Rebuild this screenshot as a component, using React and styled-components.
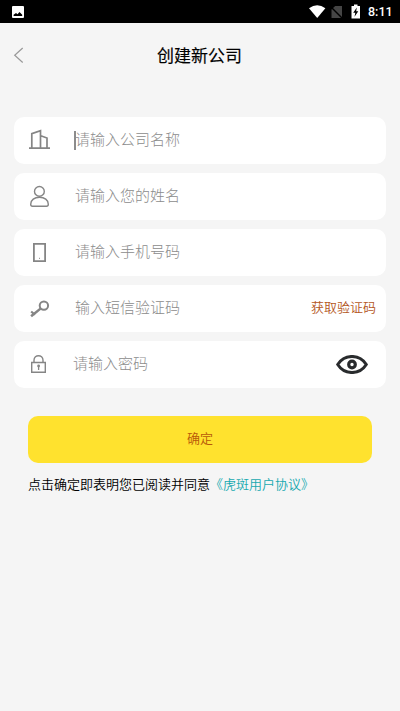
import React from 'react';
import styled, { createGlobalStyle } from 'styled-components';

const GlobalStyle = createGlobalStyle`
  * { box-sizing: border-box; }
  body { margin: 0; background: #f5f5f5; font-family: "Noto Sans CJK SC", sans-serif; }
  button, input { font-family: inherit; }
`;

const Screen = styled.main`
  width: 400px;
  height: 711px;
  background: #f5f5f5;
  overflow: hidden;
`;

const StatusBar = styled.div`
  display: flex;
  align-items: center;
  height: 23px;
  padding: 0 8px 0 12px;
  background: #000;
  svg { display: block; }
`;

const StatusIcons = styled.div`
  display: flex;
  align-items: center;
  margin-left: auto;
`;

const Clock = styled.span`
  margin-left: 7px;
  color: #fff;
  font: 500 12.5px/23px Roboto, sans-serif;
  width: 24px;
  white-space: nowrap;
`;

const Header = styled.header`
  display: grid;
  grid-template-columns: 40px 1fr 41px;
  align-items: center;
  height: 64px;
`;

const BackButton = styled.button`
  display: flex;
  padding: 0 0 0 13px;
  border: 0;
  background: none;
`;

const Title = styled.h1`
  margin: 0;
  color: #000;
  font-size: 17px;
  font-weight: 400;
  line-height: 24px;
  text-align: center;
  -webkit-text-stroke: 0.15px #000;
`;

const Form = styled.form`
  display: flex;
  flex-direction: column;
  gap: 9px;
  padding: 30px 14px 0;
`;

const Field = styled.label`
  display: flex;
  align-items: center;
  height: 47px;
  padding-right: 10px;
  border-radius: 10px;
  background: #fff;
`;

const FieldIcon = styled.span`
  display: flex;
  width: 24px;
  margin: 0 ${(p) => (p.$tight ? 21 : 23)}px 0 14px;
`;

const Caret = styled.span`
  width: 2px;
  height: 19px;
  margin: 0 -1px 0 -1px;
  background: #8c8c8c;
`;

const Placeholder = styled.span`
  flex: 1;
  color: #8c8c8c;
  font-size: 15px;
  font-weight: 300;
  line-height: 22px;
  padding-bottom: 3px;
`;

const CodeButton = styled.button`
  padding: 0 0 3px;
  border: 0;
  background: none;
  color: #b4561c;
  font-size: 13px;
  font-weight: 350;
  line-height: 20px;
`;

const EyeButton = styled.button`
  display: flex;
  padding: 0;
  margin-right: 8px;
  border: 0;
  background: none;
`;

const SubmitButton = styled.button`
  height: 47px;
  margin: 19px 14px 0;
  padding: 0 0 4px;
  border: 0;
  border-radius: 10px;
  background: #ffe22e;
  color: #b85808;
  font-size: 13px;
  font-weight: 350;
`;

const Agreement = styled.p`
  margin: 2px 14px 0;
  color: #000;
  font-size: 13px;
  font-weight: 350;
  line-height: 20px;
  white-space: nowrap;
`;

const AgreementLink = styled.a`
  color: #17a9b0;
`;

const icons = {
  company: (
    <path d="M1 19.1H22M3.8 19V4.6L12.5 1.6V19M12.8 6.8L19 9V19" strokeWidth="1.7" />
  ),
  person: (
    <>
      <circle cx="11.4" cy="6.4" r="4.9" />
      <path d="M4.5 21.2H18.5Q20.3 21.2 20.3 19.2C20.3 15 16.5 12.3 11.5 12.3S2.7 15 2.7 19.2Q2.7 21.2 4.5 21.2Z" />
    </>
  ),
  phone: (
    <>
      <path d="M5.9 2.9H17.1V20.1H5.9Z" strokeWidth="1.8" />
      <path d="M11 17.3H12" strokeWidth="1" />
    </>
  ),
  key: (
    <>
      <circle cx="15.9" cy="8.6" r="4.2" strokeWidth="2" />
      <path d="M12.8 11.4L3.1 19.2" strokeWidth="2.5" />
      <path d="M3.2 14.5L6.8 17.8" strokeWidth="2.2" />
    </>
  ),
  lock: (
    <>
      <path d="M3.7 9.5H17.3V19.3H3.7ZM6 9.3V7.2C6 1.2 15 1.2 15 7.2V9.3" strokeWidth="1.4" />
      <path d="M10.6 12V17" strokeWidth="1.3" />
      <circle cx="10.6" cy="13" r="1.4" fill="#858585" stroke="none" />
    </>
  ),
};

const Icon = ({ name }) => (
  <svg width="24" height="23" viewBox="0 0 24 23" fill="none" stroke="#858585" strokeWidth="1.4">
    {icons[name]}
  </svg>
);

const fields = [
  { icon: 'company', text: '请输入公司名称', focused: true },
  { icon: 'person', text: '请输入您的姓名' },
  { icon: 'phone', text: '请输入手机号码' },
  { icon: 'key', text: '输入短信验证码', action: <CodeButton type="button">获取验证码</CodeButton> },
  {
    icon: 'lock',
    text: '请输入密码',
    tight: true,
    action: (
      <EyeButton type="button" aria-label="显示密码">
        <svg width="32" height="19" viewBox="0 0 32 19" fill="none" stroke="#292b2d">
          <path d="M1.7 9.5C8.5-1.2 23.5-1.2 30.3 9.5C23.5 20.2 8.5 20.2 1.7 9.5Z" strokeWidth="3" />
          <circle cx="16" cy="9.5" r="3.3" strokeWidth="3.2" />
        </svg>
      </EyeButton>
    ),
  },
];

export default function App() {
  return (
    <Screen>
      <GlobalStyle />
      <StatusBar>
        <svg width="12" height="12" viewBox="0 0 12 12">
          <rect width="12" height="12" rx="1" fill="#fff" />
          <path d="M1.6 10V8.7L4 6.9L5.5 8.2L7.5 6L10.2 8.7V10Z" fill="#000" />
        </svg>
        <StatusIcons>
          <svg width="52" height="16" viewBox="0 0 52 16">
            <path d="M0 4.3Q8.2-1.7 16.4 4.3L8.2 14Z" fill="#fff" />
            <path d="M26.2 2H33V14H22.5V5.4Z" fill="#454545" />
            <path d="M22 3L33.5 14.5" stroke="#000" strokeWidth="1.4" />
            <path d="M42.5 2H45V.5H48.5V2H51V14.5H42.5Z" fill="#fff" />
            <path d="M47.8 3.5L44.2 8.7H46.3L45.5 12.7L49.3 7.3H47.2Z" fill="#000" />
          </svg>
          <Clock>8:11</Clock>
        </StatusIcons>
      </StatusBar>
      <Header>
        <BackButton aria-label="返回">
          <svg width="12" height="16" viewBox="0 0 12 16" fill="none" stroke="#999" strokeWidth="1.2">
            <path d="M9.7 1L1.7 8.2L9.7 15.5" />
          </svg>
        </BackButton>
        <Title>创建新公司</Title>
      </Header>
      <Form>
        {fields.map((f) => (
          <Field key={f.icon}>
            <FieldIcon $tight={f.tight}><Icon name={f.icon} /></FieldIcon>
            {f.focused && <Caret />}
            <Placeholder>{f.text}</Placeholder>
            {f.action}
          </Field>
        ))}
        <SubmitButton type="button">确定</SubmitButton>
        <Agreement>
          点击确定即表明您已阅读并同意<AgreementLink>《虎斑用户协议》</AgreementLink>
        </Agreement>
      </Form>
    </Screen>
  );
}
